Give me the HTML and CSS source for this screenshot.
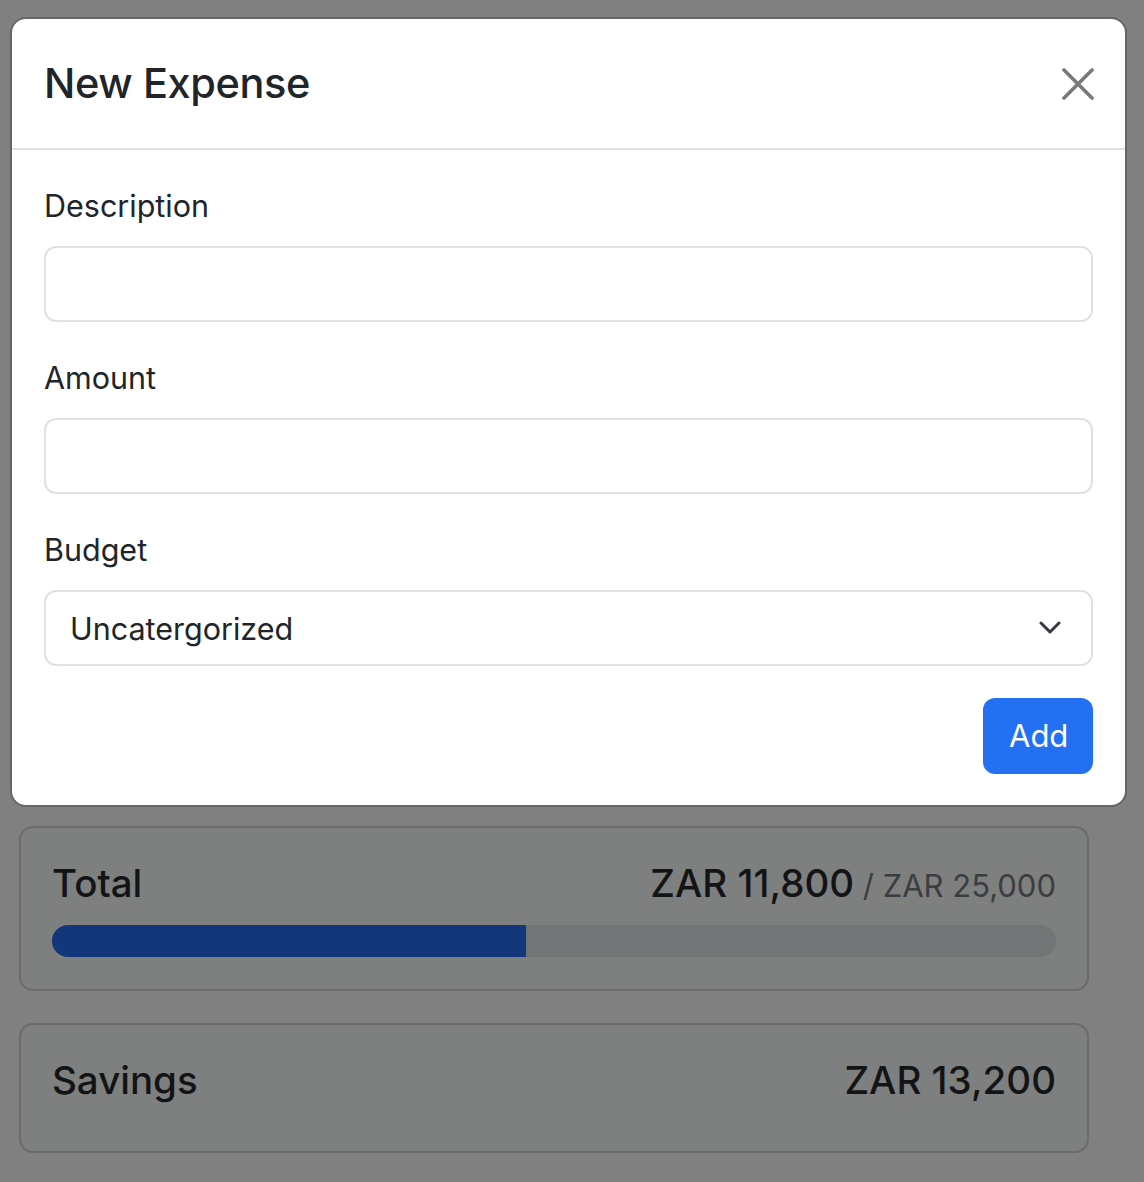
FILE: index.html
```html
<!DOCTYPE html>
<html lang="en">
<head>
<meta charset="utf-8">
<title>New Expense</title>
<link rel="stylesheet" href="styles.css">
</head>
<body>
<div class="page">
  <div class="modal">
    <div class="modal-header">
      <h5 class="modal-title">New Expense</h5>
      <button class="btn-close" type="button" aria-label="Close">
        <svg viewBox="0 0 32 32" width="32" height="32"><path d="M2 2L30 30M30 2L2 30" stroke="#7a7a7a" stroke-width="3.6" stroke-linecap="round" fill="none"/></svg>
      </button>
    </div>
    <div class="modal-body">
      <div class="field">
        <label class="label">Description</label>
        <div class="input"></div>
      </div>
      <div class="field">
        <label class="label">Amount</label>
        <div class="input"></div>
      </div>
      <div class="field">
        <label class="label">Budget</label>
        <div class="input select">
          <span>Uncatergorized</span>
          <svg viewBox="0 0 22 14" width="22" height="14"><path d="M2 2L11 11L20 2" stroke="#343a40" stroke-width="3" stroke-linecap="round" stroke-linejoin="round" fill="none"/></svg>
        </div>
      </div>
      <div class="actions">
        <button class="btn-primary" type="button">Add</button>
      </div>
    </div>
  </div>

  <div class="cards">
    <div class="card">
      <div class="card-title">
        <span class="name">Total</span>
        <span class="amount">ZAR 11,800<span class="max"> / ZAR 25,000</span></span>
      </div>
      <div class="progress"><div class="progress-bar" style="width: 47.2%"></div></div>
    </div>
    <div class="card">
      <div class="card-title">
        <span class="name">Savings</span>
        <span class="amount">ZAR 13,200</span>
      </div>
    </div>
  </div>
</div>
</body>
</html>
```

FILE: styles.css
```css
* { box-sizing: border-box; }
html, body {
  margin: 0;
  padding: 0;
  background: #808080;
  font-family: Inter, "Noto Sans", "Liberation Sans", sans-serif;
  color: #212529;
}
.page {
  width: 1144px;
  height: 1182px;
  overflow: hidden;
  padding-top: 17px;
}
.modal {
  margin: 0 17px 0 10px;
  background: #fff;
  border: 2px solid #666;
  border-radius: 16px;
  overflow: hidden;
}
.modal-header {
  display: flex;
  align-items: center;
  justify-content: space-between;
  padding: 0 31px 0 32px;
  height: 131px;
  border-bottom: 2px solid #dee2e6;
}
.modal-title {
  margin: 0;
  font-size: 41.5px;
  font-weight: 500;
  line-height: 1.2;
  letter-spacing: -0.4px;
}
.btn-close {
  border: 0;
  background: none;
  padding: 0;
  width: 32px;
  height: 32px;
  display: flex;
  align-items: center;
  justify-content: center;
}
.modal-body {
  padding: 32px 32px 31px 32px;
}
.field {
  margin-bottom: 32px;
}
.label {
  display: block;
  font-size: 30.5px;
  line-height: 48px;
  margin-bottom: 16px;
  color: #212529;
}
.input {
  height: 76px;
  border: 2px solid #dee2e6;
  border-radius: 12px;
  background: #fff;
}
.select {
  display: flex;
  align-items: center;
  justify-content: space-between;
  padding: 0 30px 0 24px;
  font-size: 30.5px;
  color: #212529;
}
.actions {
  display: flex;
  justify-content: flex-end;
}
.btn-primary {
  border: 0;
  background: #2371f2;
  color: #fff;
  font-family: inherit;
  font-size: 31px;
  line-height: 48px;
  padding: 13px 26px 14px;
  border-radius: 12px;
  width: 110px;
  height: 76px;
}
.cards {
  margin: 19px 55px 0 19px;
  display: flex;
  flex-direction: column;
  gap: 32px;
}
.card {
  background: #7e7f7f;
  border: 2px solid #6b6b6b;
  border-radius: 14px;
  padding: 32px 31px 32px 31px;
}
.card-title {
  display: flex;
  justify-content: space-between;
  align-items: baseline;
  font-size: 38.5px;
  font-weight: 500;
  line-height: 46px;
  margin-bottom: 16px;
  color: #121416;
}
.max {
  font-size: 31px;
  font-weight: 400;
  color: #3b3d40;
}
.progress {
  height: 32px;
  border-radius: 16px;
  background: #737476;
  overflow: hidden;
}
.progress-bar {
  height: 100%;
  background: #12377a;
}
```
